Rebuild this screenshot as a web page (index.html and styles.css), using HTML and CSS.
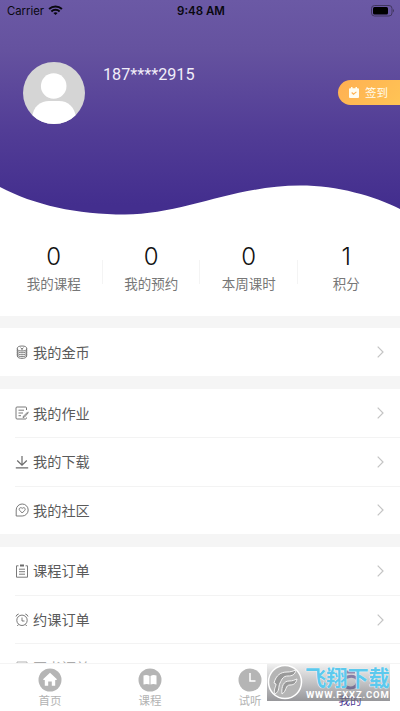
FILE: index.html
```html
<!DOCTYPE html>
<html lang="zh-CN">
<head>
<meta charset="utf-8">
<title>我的</title>
<link rel="stylesheet" href="styles.css">
</head>
<body>
<div class="app">
  <main class="content">
    <header class="hero">
      <svg class="wave" viewBox="0 0 400 40" preserveAspectRatio="none"><path d="M0 12C34 30 77 39.5 125 39.5C182 39.500 235 10.500 300 10.500C338 10.500 374 21 400 34V40H0Z" fill="#fff"/></svg>
      <div class="statusbar">
        <div class="carrier">Carrier
          <svg class="wifi" width="15" height="11" viewBox="0 0 16 12" fill="none" stroke="#09080f" stroke-width="2.200"><path d="M1 4.300C5 .6 11 .6 15 4.300M3.500 7C6 4.700 10 4.700 12.500 7"/><path d="M5.700 8.600Q8 7 10.300 8.600L8 11Z" fill="#09080f" stroke="none"/></svg>
        </div>
        <div class="time">9:48 AM</div>
        <svg class="battery" width="24" height="12" viewBox="0 0 24 12"><rect x=".5" y=".5" width="20.500" height="10.500" rx="3" fill="none" stroke="#40365f"/><rect x="2" y="2" width="15" height="7.500" rx="1.500" fill="#000"/><path d="M22 4Q24 5.700 22 7.500Z" fill="#40365f"/></svg>
      </div>
      <div class="profile">
        <svg class="avatar" width="62" height="62" viewBox="0 0 62 62"><defs><clipPath id="face"><circle cx="31" cy="31" r="31"/></clipPath></defs><g clip-path="url(#face)"><rect width="62" height="62" fill="#d5d5d5"/><circle cx="30.700" cy="24" r="12.800" fill="#fff"/><path d="M9 56C10 44 18 39 26 39H36C45 39 52 45 53 56V63H9Z" fill="#fff"/></g></svg>
        <div class="phone">187****2915</div>
        <div class="checkin">
          <svg width="10" height="11" viewBox="0 0 10 11"><path d="M1 1.200H2V0H3.500V1.200H6.500V0H8V1.200H9Q10 1.200 10 2.200V10Q10 11 9 11H1Q0 11 0 10V2.200Q0 1.200 1 1.200Z" fill="#fffdf0"/><path d="M2.700 5.500L4.500 7.200L7.400 4.900" fill="none" stroke="#ffb352" stroke-width="1.100"/></svg>
          <span>签到</span>
        </div>
      </div>
    </header>
    <section class="stats">
      <div class="stat"><b>0</b><span>我的课程</span></div>
      <div class="stat"><b>0</b><span>我的预约</span></div>
      <div class="stat"><b>0</b><span>本周课时</span></div>
      <div class="stat"><b>1</b><span>积分</span></div>
    </section>
    <section class="group">
      <div class="row"><svg class="icon" viewBox="0 0 14 14"><ellipse cx="7" cy="3.500" rx="4.700" ry="2.500"/><path d="M2.300 3.500V11C2.300 14.200 11.700 14.200 11.700 11V3.500M2.300 5.500C2.300 8.500 11.700 8.500 11.700 5.500M2.300 7.500C2.300 10.500 11.700 10.500 11.700 7.500M2.300 9.400C2.300 12.400 11.700 12.400 11.700 9.400M5.500 2.700L7 4L8.500 2.700M7 4V5.500"/></svg><span>我的金币</span><svg class="chevron" viewBox="0 0 7 12"><path d="M.7 .7L6 6L.7 11.300"/></svg></div>
    </section>
    <section class="group">
      <div class="row"><svg class="icon" viewBox="0 0 14 14"><path d="M11.500 4V2Q11.500 1 10.500 1H2Q1 1 1 2V12Q1 13 2 13H10.500Q11.500 13 11.500 11.500M3.500 4.200H9M3.500 7H8M3.500 9.700H6M12.900 5.800L8.500 10.200L8 11.500L9.500 11L13.500 6.500"/></svg><span>我的作业</span><svg class="chevron" viewBox="0 0 7 12"><path d="M.7 .7L6 6L.7 11.300"/></svg></div>
      <div class="row"><svg class="icon strong" viewBox="0 0 14 14"><path d="M7 1V10M2.200 5.500L7 10.200L11.800 5.500M.8 12.800H13.200"/></svg><span>我的下载</span><svg class="chevron" viewBox="0 0 7 12"><path d="M.7 .7L6 6L.7 11.300"/></svg></div>
      <div class="row"><svg class="icon" viewBox="0 0 14 14"><path d="M1.200 13V7A6 6 0 1 1 7.200 13ZM7.200 10L4.600 7.300C3.200 5.500 5.700 3.600 7.200 5.400C8.700 3.600 11.200 5.500 9.800 7.300Z"/></svg><span>我的社区</span><svg class="chevron" viewBox="0 0 7 12"><path d="M.7 .7L6 6L.7 11.300"/></svg></div>
    </section>
    <section class="group">
      <div class="row"><svg class="icon" viewBox="0 0 14 14"><path d="M3.500 1.800H1.500V13.200H12.500V1.800H10.500M4 5.200H10M4 7.700H10M4 10.200H10"/><path d="M5 1.500H9" stroke-width="2"/></svg><span>课程订单</span><svg class="chevron" viewBox="0 0 7 12"><path d="M.7 .7L6 6L.7 11.300"/></svg></div>
      <div class="row"><svg class="icon" viewBox="0 0 14 14"><circle cx="7" cy="7.300" r="5.200"/><path d="M7 4.500V8H9.500M1 3.500Q1.500 1.500 3.700 1M10.300 1Q12.500 1.500 13 3.500M3.500 11.500L2.300 13M10.500 11.500L11.700 13"/></svg><span>约课订单</span><svg class="chevron" viewBox="0 0 7 12"><path d="M.7 .7L6 6L.7 11.300"/></svg></div>
      <div class="row faded"><svg class="icon" viewBox="0 0 14 14"><path d="M2 1H12V13H2ZM4 3H10"/></svg><span>图书订单</span></div>
    </section>
  </main>
  <nav class="tabs">
    <div class="tab"><svg viewBox="0 0 24 24"><circle cx="12" cy="12" r="11.500"/><path d="M12 4.800L5.300 11V12H6.800V17.800H10.200V13.500H13.800V17.800H17.200V12H18.700V11Z" fill="#fff"/></svg><span>首页</span></div>
    <div class="tab"><svg viewBox="0 0 24 24"><circle cx="12" cy="12" r="11.500"/><path d="M5.500 7.500Q9 6.500 11.500 8V16.500Q9 15.300 5.500 16.500ZM12.500 8Q15 6.500 18.500 7.500V16.500Q15 15.300 12.500 16.500Z" fill="#fff"/></svg><span>课程</span></div>
    <div class="tab"><svg viewBox="0 0 24 24"><circle cx="12" cy="12" r="11.500"/><path d="M12 5V13H17.500" fill="none" stroke="#fff" stroke-width="1.500"/></svg><span>试听</span></div>
    <div class="tab active"><svg viewBox="0 0 24 24"><path d="M7 4H17M7 4V10C15 6 22 10 19 16C17 21 9 21 6 17" fill="none" stroke="#4b3792" stroke-width="3"/></svg><span>我的</span></div>
  </nav>
  <div class="watermark">
    <svg class="seal" width="36" height="36" viewBox="0 0 36 36"><circle cx="18" cy="18" r="16.500" fill="#b5b5b5" stroke="#fff" stroke-width="1.500"/><path d="M7 19C9 11 14 8 20 8C24 8 26 7 29 6C28 11 25 12 21 12C16 12 15 15 13 19C11 23 13 27 8 30C6 26 9 23 9 20Z" fill="#999" stroke="#f5f5f5"/><path d="M15 30C14 22 17 17 22 17C26 17 27 16 30 15C29 20 26 21 23 21C18 21 20 27 15 30Z" fill="#999" stroke="#f5f5f5"/></svg>
    <div class="brand"><strong>飞翔下载</strong><span>WWW.FXXZ.COM</span></div>
  </div>
</div>
</body>
</html>
```

FILE: styles.css
```css
* { box-sizing: border-box; }
body { margin: 0; background: #fff; font-family: "Noto Sans CJK SC", sans-serif; }
.app { position: relative; display: flex; flex-direction: column; height: 711px; width: 400px; overflow: hidden; }
.content { flex: 1; min-height: 0; overflow: hidden; }
.hero { position: relative; height: 215px; background: linear-gradient(#6b59a5, #65529f 50px, #523d96 130px, #432e8e 205px); }
.wave { position: absolute; left: 0; bottom: 0; width: 400px; height: 40px; }
.statusbar { display: grid; grid-template-columns: 1fr auto 1fr; align-items: center; height: 21px; padding: 0 5px 0 7px; font: 11.3px Inter, sans-serif; color: #09080f; }
.carrier { display: flex; align-items: center; gap: 4px; }
.time { font-weight: 600; font-size: 11.5px; }
.battery { justify-self: end; }
.profile { display: flex; align-items: flex-start; padding: 41px 0 0 23px; }
.avatar { flex: none; }
.phone { margin: 2px 0 0 18px; color: #f1eef9; font: 16.2px/22px Roboto, sans-serif; }
.checkin { display: flex; align-items: center; gap: 6px; width: 62px; height: 25px; margin: 18px 0 0 auto; padding-left: 11px; border-radius: 13px 0 0 13px; background: linear-gradient(135deg, #ffb052, #ffc455); color: #fffdf0; font-size: 11.5px; }
.checkin span { line-height: 16px; margin-top: -1px; }
.stats { display: grid; grid-template-columns: repeat(4, 97.5px); height: 101px; padding: 28px 5px 0; }
.stat { position: relative; display: flex; flex-direction: column; align-items: center; }
.stat b { font: 300 24px/28px Inter, sans-serif; color: #111; }
.stat span { margin-top: 2px; font-size: 13.5px; line-height: 20px; color: #777; }
.stat + .stat::before { content: ""; position: absolute; left: -1px; top: 17px; height: 24px; width: 1px; background: #f4f4f4; }
.group { padding: 0 0 0 15px; border-top: 13px solid #f5f5f5; }
.stats + .group { border-top-width: 12px; }
.row { display: flex; align-items: center; height: 48.2px; padding-right: 16px; color: #5a5a5a; font-size: 14.2px; }
.row span { margin-top: -1px; }
.row + .row { border-top: 1px solid #f3f3f3; }
.faded { color: #aaa; }
.icon { width: 14px; height: 14px; margin-right: 4px; fill: none; stroke: #6b6b6b; stroke-width: .9; }
.strong { stroke-width: 1.2; }
.faded .icon { stroke: #aaa; }
.chevron { width: 7px; height: 12px; margin-left: auto; fill: none; stroke: #c4c4c4; stroke-width: 1.2; }
.tabs { display: grid; grid-template-columns: repeat(4, 1fr); height: 48px; padding-top: 5px; border-top: 1px solid #f4f4f4; background: #fff; }
.tab { display: flex; flex-direction: column; align-items: center; color: #b2b2b2; }
.tab svg { width: 24px; height: 24px; margin-top: -1px; fill: #b5b5b5; }
.tab span { font-size: 11.5px; line-height: 16px; }
.active { color: #4b3792; }
.watermark { position: absolute; left: 267px; top: 664px; width: 123px; height: 37px; display: flex; background: linear-gradient(rgba(225, 225, 225, .5), rgba(110, 110, 115, .72)); }
.seal { flex: none; }
.brand { display: flex; flex-direction: column; padding-left: 2px; }
.brand strong { font-size: 21.2px; line-height: 26px; font-weight: 700; color: #5cc9ed; text-shadow: 0 0 1px #fff, 0 0 1px #fff; white-space: nowrap; }
.brand span { padding-left: 1px; font: bold 9.5px/10px Roboto, sans-serif; letter-spacing: .8px; color: #fff; white-space: nowrap; }
```
